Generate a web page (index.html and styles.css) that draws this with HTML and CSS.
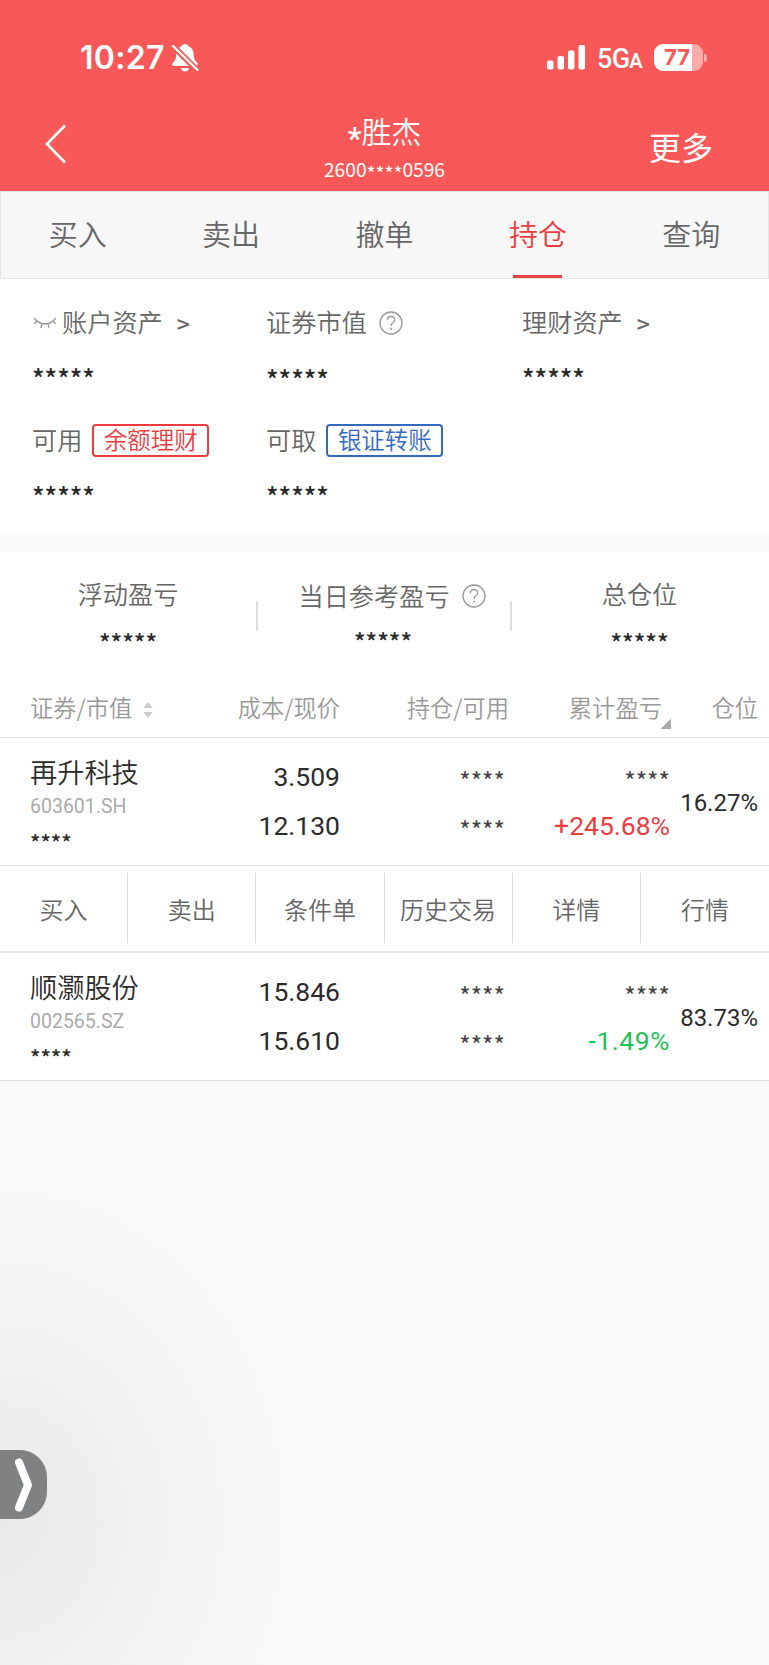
FILE: index.html
```html
<!DOCTYPE html>
<html lang="zh-CN">
<head>
<meta charset="utf-8">
<title>持仓</title>
<link rel="stylesheet" href="styles.css">
</head>
<body>
<header class="header">
  <div class="status">
    <span class="time">10:27</span>
    <svg class="bell" width="28" height="30" viewBox="0 0 28 30">
      <path fill="#fff" d="M14 1c-1.900 0-3 1-3.300 2.200C6.800 4.500 5.300 8 5.200 12c-.1 4-1 5.500-3.100 7.600C.8 21 1 23 3 23h22c2 0 2.200-2 .9-3.400-2.100-2.100-3-3.600-3.100-7.600-.1-4-1.600-7.500-5.500-8.800C17 2 15.900 1 14 1zM10 25h8c-.5 2.300-2 3.600-4 3.600S10.500 27.300 10 25z"/>
      <path stroke="#f85858" stroke-width="6" d="M-1 0l29 29"/>
      <path stroke="#fff" stroke-width="2.300" stroke-linecap="round" d="M2 3l24.500 24"/>
    </svg>
    <svg class="signal" width="38" height="25" viewBox="0 0 38 25" fill="#fff">
      <rect x="0" y="15.500" width="6.500" height="9" rx="2"/>
      <rect x="10.500" y="11" width="6.500" height="13.500" rx="2"/>
      <rect x="21" y="5.500" width="6.500" height="19" rx="2"/>
      <rect x="31.500" y="0" width="6.500" height="24.500" rx="2"/>
    </svg>
    <span class="network">5G<small>A</small></span>
    <span class="battery"><b>77</b></span>
    <i class="battery-cap"></i>
  </div>
  <div class="nav">
    <svg class="back" width="24" height="42" viewBox="0 0 24 42" fill="none" stroke="#fff" stroke-width="2.600"><path d="M21 2.500L3 21l18 18.500"/></svg>
    <div class="account">
      <h1><span class="title-star">*</span>胜杰</h1>
      <p>2600<span class="number-stars">****</span>0596</p>
    </div>
    <span class="more">更多</span>
  </div>
</header>

<nav class="tabs">
  <span>买入</span><span>卖出</span><span>撤单</span><span class="active">持仓</span><span>查询</span>
</nav>

<section class="assets">
  <div class="cell">
    <div class="label"><svg class="eye" width="24" height="14" viewBox="0 0 24 14" fill="none" stroke="#999" stroke-width="1.300" stroke-linecap="round"><path d="M1.500 2.500C7 9.500 17 9.500 22.500 2.500M4 5L1.500 7.500M9 7.500l-1 4M15 7.500l1 4M20 5l2.500 2.500"/></svg>账户资产<span class="arrow">&gt;</span></div>
    <div class="stars">*****</div>
  </div>
  <div class="cell">
    <div class="label">证券市值<svg class="help" width="24" height="24" viewBox="0 0 24 24" fill="none" stroke="#999" stroke-width="1.300"><circle cx="12" cy="12" r="11"/><path d="M8.300 9.300c0-5 7.400-5 7.400-.5 0 2.900-3.600 2.800-3.600 6.200"/><path stroke-width="1.800" d="M11.200 17.700H13"/></svg></div>
    <div class="stars lower">*****</div>
  </div>
  <div class="cell">
    <div class="label">理财资产<span class="arrow">&gt;</span></div>
    <div class="stars">*****</div>
  </div>
  <div class="cell">
    <div class="label">可用<span class="badge red">余额理财</span></div>
    <div class="stars">*****</div>
  </div>
  <div class="cell">
    <div class="label">可取<span class="badge blue">银证转账</span></div>
    <div class="stars">*****</div>
  </div>
</section>

<section class="summary">
  <div class="sum"><div class="label">浮动盈亏</div><div class="stars">*****</div></div>
  <div class="sum"><div class="label dropped">当日参考盈亏<svg class="help" width="24" height="24" viewBox="0 0 24 24" fill="none" stroke="#999" stroke-width="1.300"><circle cx="12" cy="12" r="11"/><path d="M8.300 9.300c0-5 7.400-5 7.400-.5 0 2.900-3.600 2.800-3.600 6.200"/><path stroke-width="1.800" d="M11.200 17.700H13"/></svg></div><div class="stars">*****</div></div>
  <div class="sum"><div class="label">总仓位</div><div class="stars">*****</div></div>
</section>

<section class="table">
  <div class="row head">
    <span class="first">证券/市值<svg class="sort" width="10" height="16" viewBox="0 0 10 16" fill="#ccc"><path d="M5 0l4.800 6H.2zM5 16l4.800-6H.2z"/></svg></span>
    <span>成本/现价</span>
    <span>持仓/可用</span>
    <span class="profit">累计盈亏<i class="corner"></i></span>
    <span>仓位</span>
  </div>

  <div class="row stock">
    <div class="first"><div class="name">再升科技</div><div class="code">603601.SH</div><div class="value">****</div></div>
    <div class="pair"><span>3.509</span><span>12.130</span></div>
    <div class="pair hidden"><span class="mask">****</span><span class="mask">****</span></div>
    <div class="pair gain"><span class="mask">****</span><span class="up">+245.68%</span></div>
    <div class="ratio">16.27%</div>
  </div>

  <div class="actions">
    <span>买入</span><span>卖出</span><span>条件单</span><span>历史交易</span><span>详情</span><span>行情</span>
  </div>

  <div class="row stock">
    <div class="first"><div class="name">顺灏股份</div><div class="code">002565.SZ</div><div class="value">****</div></div>
    <div class="pair"><span>15.846</span><span>15.610</span></div>
    <div class="pair hidden"><span class="mask">****</span><span class="mask">****</span></div>
    <div class="pair gain"><span class="mask">****</span><span class="down">-1.49%</span></div>
    <div class="ratio">83.73%</div>
  </div>
</section>

<main class="blank">
  <div class="handle"><svg width="47" height="69" viewBox="0 0 47 69" fill="none" stroke="#fff" stroke-width="8" stroke-linecap="round" stroke-linejoin="round"><path d="M19 12.500l9 22.500-9 22.500"/></svg></div>
</main>
</body>
</html>
```

FILE: styles.css
```css
* { box-sizing: border-box; margin: 0; padding: 0; }

body {
  display: flex;
  flex-direction: column;
  width: 769px;
  height: 1665px;
  overflow: hidden;
  background: #fff;
  color: #2b2b2b;
  font-family: "Noto Sans CJK SC", sans-serif;
  font-weight: 350;
  white-space: nowrap;
}

i { font-style: normal; }

/* Header */
.header { height: 191px; background: #f85858; color: #fff; }
.status { display: flex; align-items: center; height: 115px; padding: 0 61px 0 80px; }
.time { width: 91px; font: 600 32px/40px Inter, sans-serif; letter-spacing: 0.300px; }
.signal { margin-left: 348px; }
.network { width: 69px; padding: 4px 0 0 12px; font: 500 27px/34px Roboto, sans-serif; letter-spacing: -0.700px; }
.network small { font-size: 20px; font-weight: 600; }
.battery {
  width: 49px; height: 27px; border-radius: 9px;
  background: linear-gradient(90deg, #fff 38px, #fcabab 38px);
  color: #f85858; text-align: center;
}
.battery b { display: block; padding-right: 3px; font: 700 22px/27px Inter, sans-serif; }
.battery-cap { width: 3px; height: 8px; margin-left: 1px; border-radius: 0 4px 4px 0; background: #fcabab; }

.nav { display: grid; grid-template-columns: 200px 1fr 200px; height: 76px; }
.back { margin: 8px 0 0 44px; }
.account { text-align: center; }
.account h1 { height: 34px; font-size: 30px; font-weight: 350; line-height: 31px; }
.title-star { font: 500 31px/1px Roboto, sans-serif; vertical-align: -6px; }
.account p { margin-top: 8px; font-size: 19.200px; font-weight: 400; line-height: 24px; }
.number-stars { line-height: 1px; vertical-align: -4px; }
.more { padding: 11px 56px 0 0; text-align: right; font-size: 32px; font-weight: 400; line-height: 40px; }

/* Tabs */
.tabs {
  display: grid; grid-template-columns: repeat(5, 1fr);
  height: 88px; border: 1px solid #e5e5e5; background: #f7f7f7;
  color: #666; font-size: 29px; line-height: 82px; text-align: center;
}
.tabs .active { color: #ec3c3f; background: linear-gradient(#e64145, #e64145) 50% 100% / 49px 3px no-repeat; }

/* Assets */
.assets {
  display: grid; grid-template-columns: 234px 256px 1fr; grid-template-rows: 118px 118px;
  height: 254px; padding: 25px 0 0 32px;
}
.label { display: flex; align-items: center; height: 34px; color: #666; font-size: 25.200px; line-height: 34px; }
.eye { margin: 4px 5px 0 1px; }
.help { margin: 3px 0 0 12px; }
.arrow { margin: 3px 0 0 14px; font-size: 23px; font-weight: 500; }
.stars { height: 30px; margin-top: 25px; font-size: 26px; font-weight: 500; line-height: 30px; }
.stars.lower { margin-top: 26px; }
.badge {
  height: 33px; width: 117px; margin: 2px 0 0 10px; border: 2px solid; border-radius: 4px;
  font-size: 23.500px; line-height: 27px; text-align: center;
}
.badge.red { color: #ec3c3f; }
.badge.blue { color: #3469bd; }

/* Profit summary */
.summary {
  display: grid; grid-template-columns: 256px 254px 259px;
  height: 147px; padding-top: 24px; border-top: 19px solid #f9fafc;
}
.sum { display: flex; flex-direction: column; align-items: center; height: 80px; }
.sum + .sum { background: linear-gradient(#ddd, #ddd) 0 25px / 2px 30px no-repeat; }
.sum .dropped { height: 38px; margin-bottom: -4px; padding-left: 18px; }
.sum .stars { margin-top: 17px; font-size: 24px; }

/* Holdings */
.row { display: grid; grid-template-columns: 172px 168px 169px 162px 87px; border-bottom: 1px solid #ddd; padding-right: 11px; text-align: right; }
.first { padding-left: 30px; text-align: left; }
.head { height: 58px; color: #999; font-size: 23.300px; line-height: 55px; }
.sort { margin-left: 11px; vertical-align: -1px; }
.profit { padding-right: 9px; position: relative; }
.corner { position: absolute; right: 0; bottom: 8px; width: 10px; height: 10px; background: linear-gradient(135deg, transparent 50%, #aaa 50%); }
.stock { height: 128px; }
.name { padding-top: 15px; font-size: 27.200px; line-height: 36px; }
.code { margin-top: 6px; color: #aaa; font: 400 19.500px/24px Roboto, sans-serif; }
.value { margin-top: 11px; font-size: 21.500px; font-weight: 500; line-height: 24px; }
.pair { display: flex; flex-direction: column; gap: 9px; padding-top: 19px; font: 400 26.500px/40px Roboto, sans-serif; }
.pair span { height: 40px; }
.pair .mask { padding-top: 4px; font-family: "Noto Sans CJK SC", sans-serif; font-size: 24.500px; color: #444; }
.hidden { padding-right: 4px; }
.gain { padding-right: 1px; }
.ratio { padding-top: 45px; font: 400 24px/40px Roboto, sans-serif; }
.up { color: #ec3c3f; }
.down { color: #1fc25b; letter-spacing: 0.500px; }

.actions {
  display: grid; grid-template-columns: repeat(6, 1fr);
  height: 87px; padding: 7px 0 9px; border-bottom: 2px solid #e5e5e5;
  color: #666; font-size: 24px; line-height: 72px; text-align: center;
}
.actions span { height: 70px; border-right: 1px solid #ddd; }
.actions span:last-child { border-right: 0; }

/* Empty area */
.blank { flex: 1; padding-top: 369px; background: radial-gradient(ellipse 360px 420px at 0 440px, #e8e9eb, #eff0f2 35%, #f5f6f8 65%, #f9fafc) #f9fafc; }
.handle { width: 47px; height: 69px; border-radius: 0 27px 27px 0; background: #808183; }
.handle svg { display: block; }
```
